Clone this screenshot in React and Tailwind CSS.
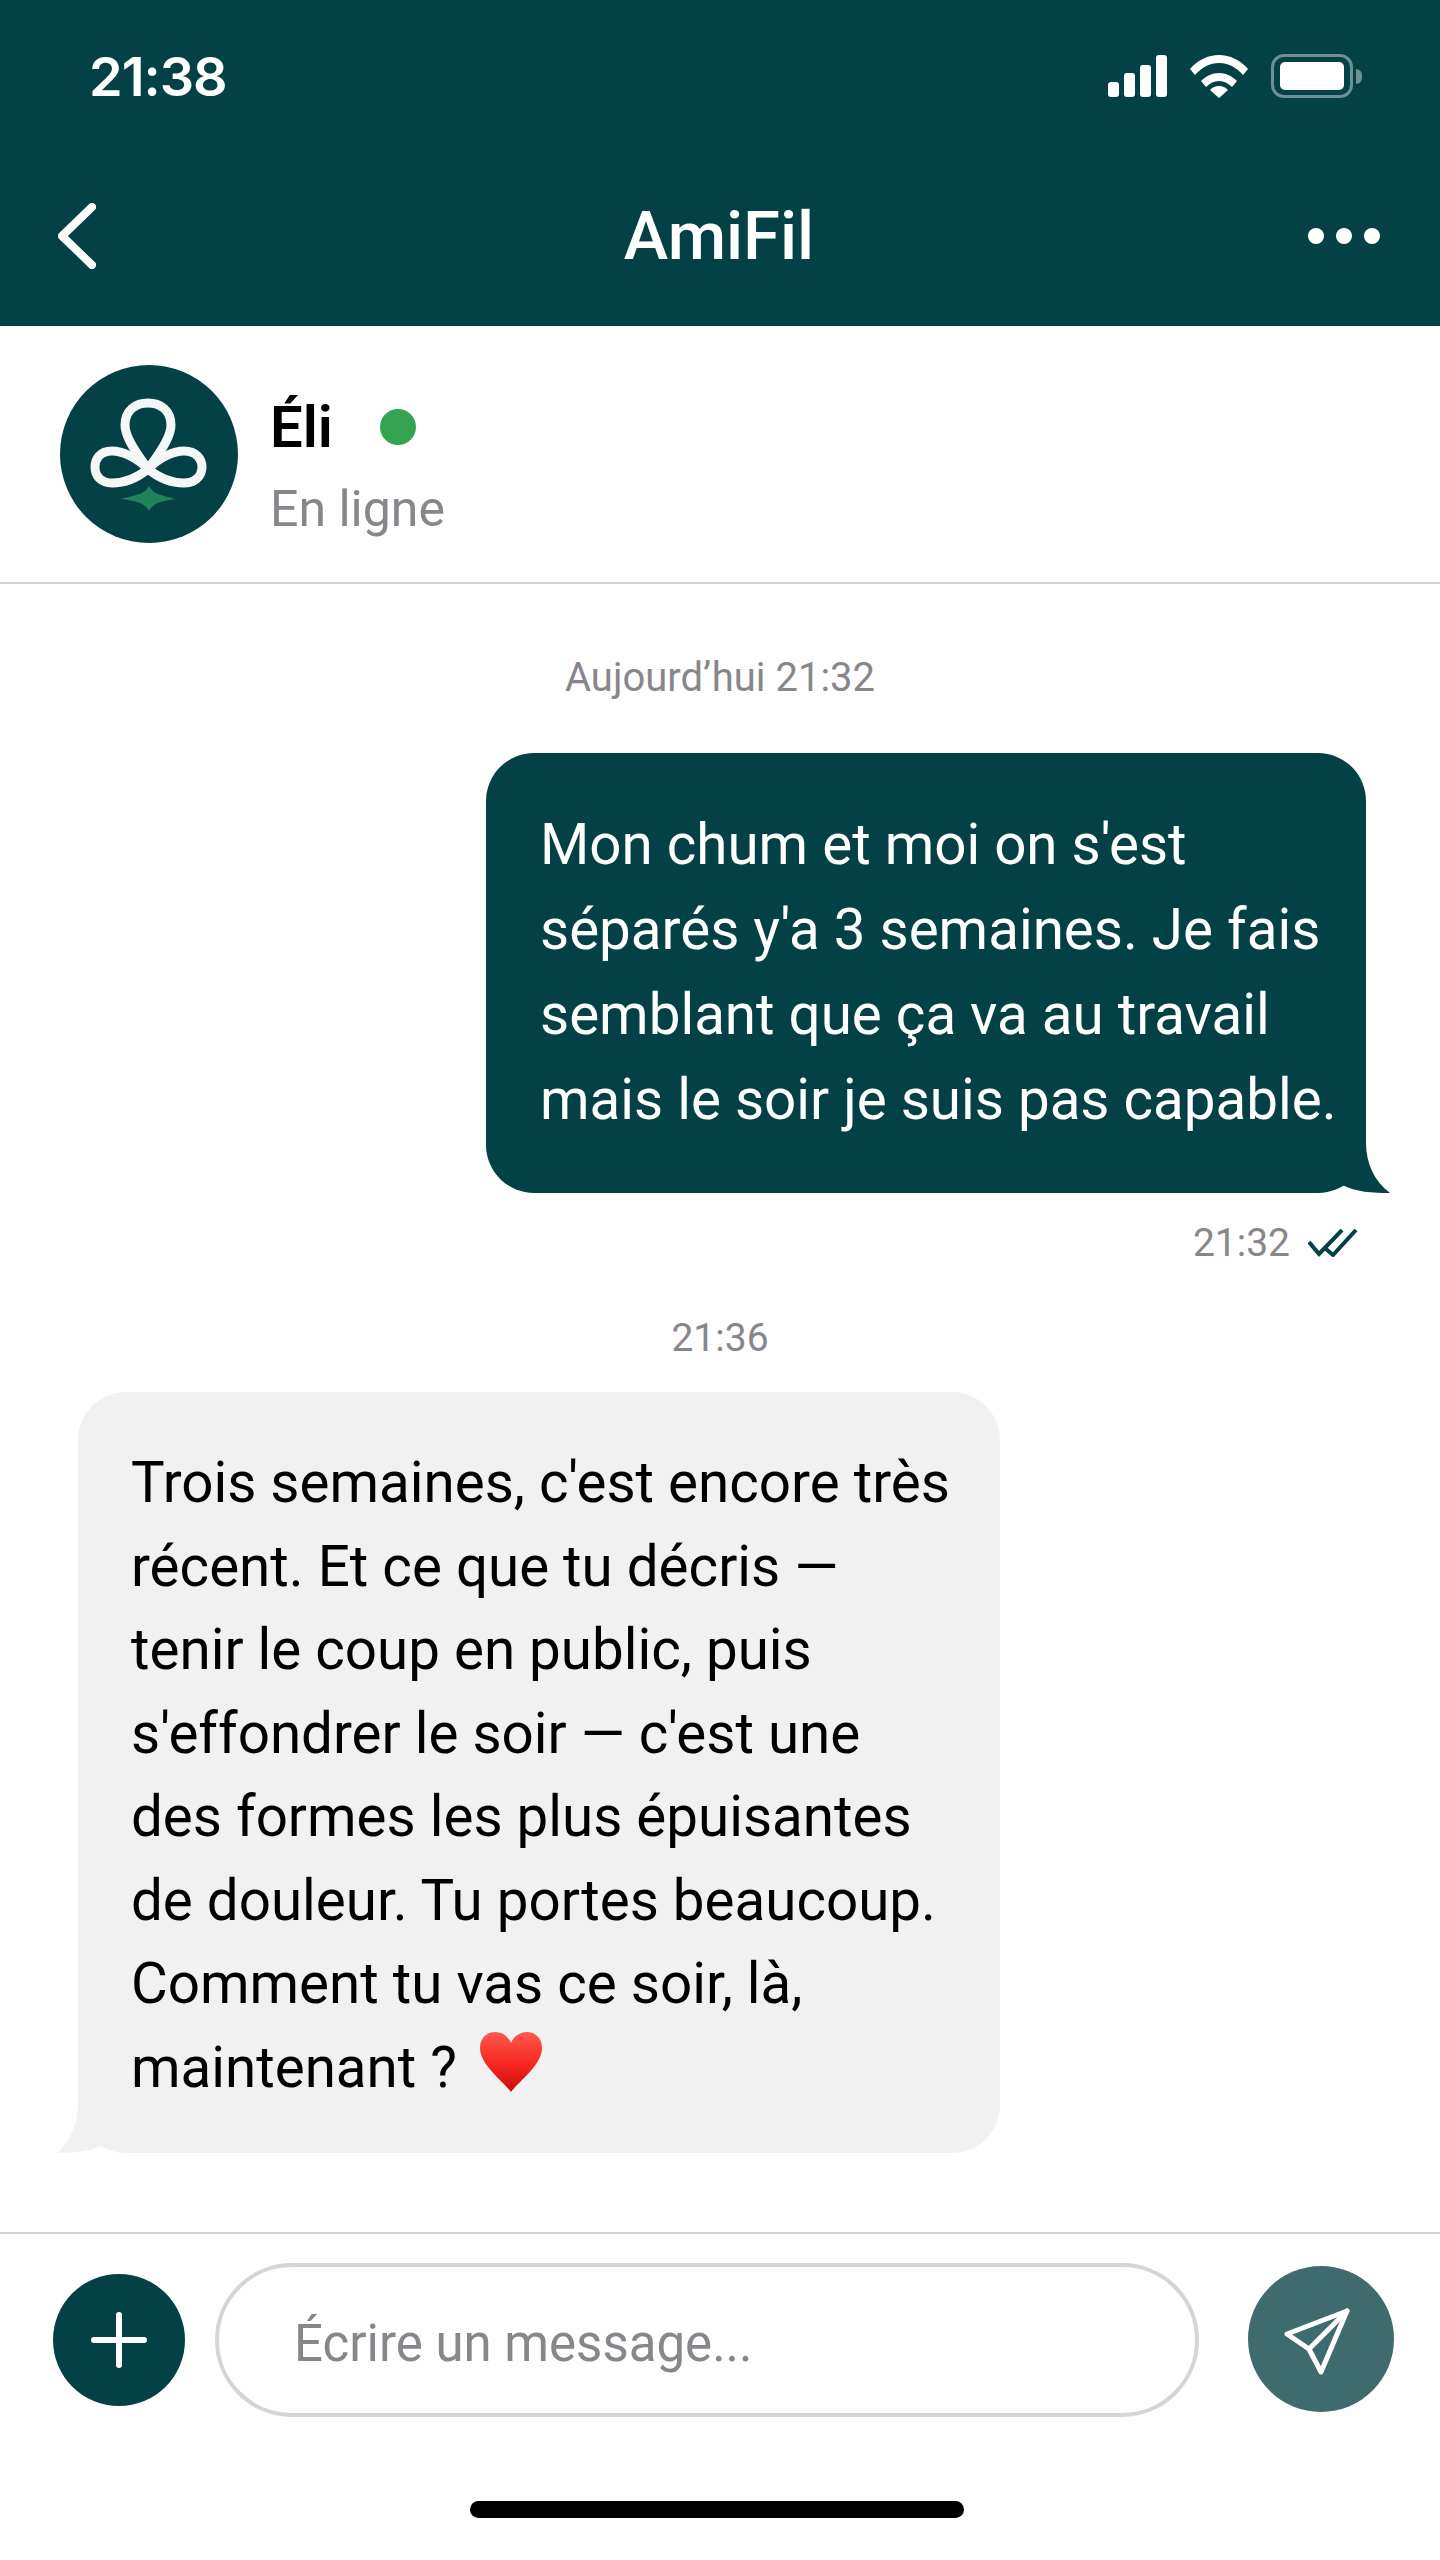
import React from 'react';

const sentLines = [
  "Mon chum et moi on s'est",
  "séparés y'a 3 semaines. Je fais",
  'semblant que ça va au travail',
  'mais le soir je suis pas capable.',
];

const replyLines = [
  "Trois semaines, c'est encore très",
  'récent. Et ce que tu décris —',
  'tenir le coup en public, puis',
  "s'effondrer le soir — c'est une",
  'des formes les plus épuisantes',
  'de douleur. Tu portes beaucoup.',
  'Comment tu vas ce soir, là,',
];

const StatusIcons = () => (
  <div className="flex items-center">
    <svg width="59" height="42" viewBox="0 0 59 42" fill="white">
      <rect x="0" y="27" width="11" height="15" rx="3" />
      <rect x="16" y="18" width="11" height="24" rx="3" />
      <rect x="32" y="10" width="11" height="32" rx="3" />
      <rect x="48" y="0" width="11" height="42" rx="3" />
    </svg>
    <svg className="ml-[23px]" width="58" height="44" viewBox="0 0 58 44" fill="white">
      <path d="M0 15C8 6 18 1 29 1s21 5 29 14l-5 6C46 13 38 9 29 9S12 13 5 21z" />
      <path d="M11 27c5-5 11-8 18-8s13 3 18 8l-5 6c-4-4-8-6-13-6s-9 2-13 6z" />
      <path d="M20 36c2-2 5-4 9-4s7 2 9 4l-9 8z" />
    </svg>
    <div className="ml-[23px] flex items-center">
      <div className="flex h-[44px] w-[82px] items-center justify-center rounded-[13px] border-[3px] border-[#6d9094]">
        <div className="h-[28px] w-[64px] rounded-[5px] bg-white" />
      </div>
      <div className="ml-[3px] h-[15px] w-[6px] rounded-r-full bg-[#6d9094]" />
    </div>
  </div>
);

const AvatarLogo = () => (
  <svg width="178" height="178" viewBox="0 0 178 178" fill="none">
    <g stroke="#f4f7f6" strokeWidth="9" strokeLinecap="round">
      <path d="M88 104C72 82 65 70 65 60C65 45 76 38 88 38C100 38 111 45 111 60C111 70 104 82 88 104" />
      <path d="M88 104C76 92 62 86 52 86C40 86 35 94 35 102C35 112 42 118 52 118C64 118 76 114 88 104" />
      <path d="M88 104C100 92 114 86 124 86C136 86 142 94 142 102C142 112 134 118 124 118C112 118 100 114 88 104" />
    </g>
    <path d="M89 121C93 128 99 130 116 134C99 136 93 139 89 146C85 139 79 136 60 134C79 130 85 128 89 121Z" fill="#1f8259" />
  </svg>
);

const Heart = () => (
  <svg className="ml-[22px] inline-block align-[-6px]" width="64" height="62" viewBox="0 0 64 62">
    <defs>
      <linearGradient id="heartFill" x1="0" y1="0" x2="0" y2="1">
        <stop offset="0" stopColor="#ff5a4d" />
        <stop offset="0.55" stopColor="#f5261f" />
        <stop offset="1" stopColor="#c90d0d" />
      </linearGradient>
    </defs>
    <path
      d="M32 61C24 50 1 34 1 17C1 7 8 1 16 1C23 1 29 5 32 12C35 5 41 1 48 1C56 1 63 7 63 17C63 34 40 50 32 61Z"
      fill="url(#heartFill)"
    />
  </svg>
);

export default function App() {
  return (
    <div className="flex h-[2560px] flex-col bg-[#fefefe] font-['Roboto',sans-serif] text-black">
      {/* app bar */}
      <div className="h-[326px] bg-[#044146] text-white">
        <div className="flex items-start justify-between pl-[89px] pr-[78px] pt-[45px]">
          <span className="font-['Inter',sans-serif] text-[54px] font-semibold leading-[64px] tracking-[-1px]">21:38</span>
          <div className="pt-[9px]">
            <StatusIcons />
          </div>
        </div>
        <div className="mt-[79px] flex h-[96px] items-center pl-[58px] pr-[60px]">
          <div className="flex-1">
            <svg width="38" height="66" viewBox="0 0 38 66" fill="none" stroke="white" strokeWidth="8" strokeLinecap="round" strokeLinejoin="round">
              <path d="M34 4L4 33L34 62" />
            </svg>
          </div>
          <span className="text-[67px] font-medium">AmiFil</span>
          <div className="flex flex-1 justify-end gap-[12px]">
            <div className="size-[16px] rounded-full bg-white" />
            <div className="size-[16px] rounded-full bg-white" />
            <div className="size-[16px] rounded-full bg-white" />
          </div>
        </div>
      </div>

      {/* contact */}
      <div className="flex h-[258px] items-center border-b-2 border-[#d4d5d5] pl-[60px]">
        <div className="size-[178px] rounded-full bg-[#044146]">
          <AvatarLogo />
        </div>
        <div className="ml-[32px] pt-[24px]">
          <div className="flex items-center">
            <span className="text-[58px] font-semibold leading-[80px]">Éli</span>
            <div className="ml-[47px] size-[36px] rounded-full bg-[#34a352]" />
          </div>
          <div className="mt-[5px] text-[50px] leading-[74px] text-[#87878b]">En ligne</div>
        </div>
      </div>

      {/* conversation */}
      <div className="flex-1">
        <p className="mt-[72px] text-center text-[40px] leading-[44px] text-[#87878b]">Aujourd’hui 21:32</p>

        <div className="relative ml-[486px] mt-[53px] h-[440px] w-[880px] rounded-[48px] bg-[#044146] pl-[54px] pt-[50px] text-[56.5px] leading-[85px] text-white">
          {sentLines.map((line) => (
            <div key={line} className="whitespace-nowrap">{line}</div>
          ))}
          <svg className="absolute bottom-0 left-[824px]" width="80" height="50" viewBox="0 0 80 50" fill="#044146">
            <path d="M56 0C56 20 64 38 80 50C62 50 46 49 32 42Z" />
          </svg>
        </div>

        <div className="mt-[28px] flex items-center justify-end pr-[82px]">
          <span className="text-[39px] leading-[44px] text-[#87878b]">21:32</span>
          <svg className="ml-[18px]" width="50" height="28" viewBox="0 0 50 28" fill="none" stroke="#044146" strokeWidth="4">
            <path d="M1 13L11 25L34 1" />
            <path d="M18 20L25 26L48 1" />
          </svg>
        </div>

        <p className="mt-[51px] text-center text-[39px] leading-[44px] text-[#87878b]">21:36</p>

        <div className="relative ml-[78px] mt-[32px] h-[761px] w-[922px] rounded-[48px] bg-[#f1f1f1] pl-[53px] pt-[50px] text-[56.5px] leading-[83.5px]">
          {replyLines.map((line) => (
            <div key={line} className="whitespace-nowrap">{line}</div>
          ))}
          <div className="whitespace-nowrap">
            maintenant ?
            <Heart />
          </div>
          <svg className="absolute bottom-0 left-[-21px]" width="80" height="50" viewBox="0 0 80 50" fill="#f1f1f1">
            <path d="M21 0C21 20 14 38 0 50C16 50 30 49 44 43Z" />
          </svg>
        </div>
      </div>

      {/* composer */}
      <div className="h-[328px] border-t-2 border-[#d4d5d5]">
        <div className="flex items-center pl-[53px] pt-[29px]">
          <div className="flex size-[132px] items-center justify-center rounded-full bg-[#044146]">
            <svg width="56" height="56" viewBox="0 0 56 56" stroke="white" strokeWidth="6" strokeLinecap="round">
              <path d="M28 3V53M3 28H53" />
            </svg>
          </div>
          <div className="ml-[30px] flex h-[154px] w-[984px] items-center rounded-full border-4 border-[#d4d5d5] pl-[75px] pt-[8px] text-[51px] text-[#87878b]">
            Écrire un message...
          </div>
          <div className="mb-[3px] ml-[49px] size-[146px] rounded-full bg-[#3f6b6f]">
            <svg width="146" height="146" viewBox="0 0 146 146" fill="none" stroke="white" strokeWidth="5" strokeLinejoin="round" strokeLinecap="round">
              <path d="M99 45L39 68L61 83L73 106Z" />
              <path d="M99 45L61 83" />
            </svg>
          </div>
        </div>
        <div className="ml-[470px] mt-[84px] h-[17px] w-[494px] rounded-full bg-black" />
      </div>
    </div>
  );
}
